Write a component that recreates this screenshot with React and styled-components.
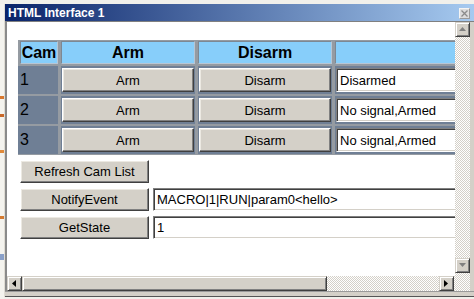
import styled, { createGlobalStyle } from "styled-components";

const cams = [
    { id: 1, status: "Disarmed" },
    { id: 2, status: "No signal,Armed" },
    { id: 3, status: "No signal,Armed" },
];

const GlobalStyle = createGlobalStyle`
    html, body {
        margin: 0;
        padding: 0;
        background: #f1f0eb;
        overflow: hidden;
        font-family: "Liberation Sans", Arial, sans-serif;
    }
    * { box-sizing: border-box; }
`;

function Arrow({ dir, color = "#000" }) {
    // small triangle glyph for scroll buttons
    const pts = {
        up: "1,6 4.5,2 8,6",
        down: "1,2 4.5,6 8,2",
        left: "6,1 2,4.5 6,8",
        right: "2,1 6,4.5 2,8",
    }[dir];
    return (
        <svg width="9" height="9" viewBox="0 0 9 9">
            <polygon points={pts} fill={color} />
        </svg>
    );
}

export default function App() {
    return (
        <Screen>
            <GlobalStyle />
            <DesktopStrip />
            <Window>
                <TitleBar>
                    <span>HTML Interface 1</span>
                    <CloseButton>
                        <svg width="9" height="9" viewBox="0 0 9 9">
                            <path d="M1.5 1.5 L7.5 7.5 M7.5 1.5 L1.5 7.5" stroke="#8a8a8a" strokeWidth="1.3" />
                        </svg>
                    </CloseButton>
                </TitleBar>

                <Frame>
                    <Viewport>
                        <CamTable>
                            <HeadCell>Cam</HeadCell>
                            <HeadCell>Arm</HeadCell>
                            <HeadCell>Disarm</HeadCell>
                            <HeadCell />

                            {cams.map(cam => (
                                <Row key={cam.id}>
                                    <CamCell>{cam.id}</CamCell>
                                    <DataCell><GrayButton>Arm</GrayButton></DataCell>
                                    <DataCell><GrayButton>Disarm</GrayButton></DataCell>
                                    <DataCell><Field>{cam.status}</Field></DataCell>
                                </Row>
                            ))}
                        </CamTable>

                        <Controls>
                            <ControlRow>
                                <GrayButton $width="129px" $height="23px">Refresh Cam List</GrayButton>
                            </ControlRow>
                            <ControlRow>
                                <GrayButton $width="129px" $height="23px">NotifyEvent</GrayButton>
                                <Field $width="340px" $height="23px">{"MACRO|1|RUN|param0<hello>"}</Field>
                            </ControlRow>
                            <ControlRow>
                                <GrayButton $width="129px" $height="23px">GetState</GrayButton>
                                <Field $width="340px" $height="23px">1</Field>
                            </ControlRow>
                        </Controls>
                    </Viewport>

                    <VScroll>
                        <ScrollButton><Arrow dir="up" color="#808080" /></ScrollButton>
                        <ScrollButton $bottom><Arrow dir="down" color="#808080" /></ScrollButton>
                    </VScroll>

                    <HScroll>
                        <ScrollButton><Arrow dir="left" /></ScrollButton>
                        <Thumb />
                        <ScrollButton $end><Arrow dir="right" /></ScrollButton>
                    </HScroll>
                </Frame>
                <BottomEdge />
            </Window>
        </Screen>
    );
}

const Screen = styled.div`
    display: flex;
    width: 474px;
    height: 299px;
    padding-top: 4px;
`;

// desktop showing behind the window on the left
const DesktopStrip = styled.div`
    width: 4px;
    flex-shrink: 0;
    background: linear-gradient(to bottom,
        #f4f3ee 0 92px, #d9782e 92px 95px, #f4f3ee 95px 110px,
        #c9692a 110px 113px, #f4f3ee 113px 146px, #e08a3a 146px 149px,
        #f4f3ee 149px 212px, #d47a30 212px 215px, #f4f3ee 215px 250px,
        #8aa0c8 250px 256px, #f4f3ee 256px);
`;

const Window = styled.div`
    flex: 1;
    display: flex;
    flex-direction: column;
    height: 293px;
    background: #d4d0c8;
    border-left: 1px solid #dedbd3;
`;

const TitleBar = styled.div`
    height: 17px;
    display: flex;
    align-items: center;
    justify-content: space-between;
    padding: 0 4px 0 3px;
    background: linear-gradient(to right, #0a246a, #a6caf0);
    color: #fff;
    font-weight: bold;
    font-size: 12px;
    white-space: nowrap;
`;

const CloseButton = styled.div`
    width: 11px;
    height: 11px;
    display: flex;
    align-items: center;
    justify-content: center;
    background: #dcdcdc;
    border: 1px solid;
    border-color: #f4f4f4 #9a9a9a #9a9a9a #f4f4f4;
    margin-top: 1px;
`;

const Frame = styled.div`
    display: grid;
    grid-template-columns: 448px 15px;
    grid-template-rows: 254px 15px;
    border-left: 2px solid #8a8a8a;
    border-top: 1px solid #808080;
`;

const Viewport = styled.div`
    background: #fff;
    overflow: hidden;
    padding: 18px 0 0 11px;
`;

const CamTable = styled.div`
    display: grid;
    grid-template-columns: 38px 134px 134px 160px;
    grid-template-rows: 23px repeat(3, 28px);
    column-gap: 3px;
    row-gap: 2px;
    width: max-content;
    padding: 1px 2px;
    background: #959ba2;
`;

const Row = styled.div`
    display: contents;
`;

const HeadCell = styled.div`
    background: #87cefa;
    font-weight: bold;
    font-size: 16px;
    display: flex;
    align-items: center;
    justify-content: center;
    border: 1px solid;
    border-color: #7d8893 #b7c6d4 #b7c6d4 #7d8893;
`;

const DataCell = styled.div`
    background: #6f7f95;
    padding: 2px 1px;
    display: flex;
    align-items: center;
`;

const CamCell = styled(DataCell)`
    font-size: 16px;
    padding-left: 2px;
    margin-left: -2px;
`;

const GrayButton = styled.div`
    width: ${({ $width }) => $width || "100%"};
    height: ${({ $height }) => $height || "24px"};
    flex-shrink: 0;
    display: flex;
    align-items: center;
    justify-content: center;
    background: #d4d0c8;
    font-size: 13px;
    color: #000;
    white-space: nowrap;
    border: 1px solid;
    border-color: #ffffff #404040 #404040 #ffffff;
    box-shadow: inset -1px -1px #808080, inset 1px 1px #ece9e2;
`;

const Field = styled.div`
    width: ${({ $width }) => $width || "100%"};
    height: ${({ $height }) => $height || "24px"};
    flex-shrink: 0;
    display: flex;
    align-items: center;
    padding-left: 3px;
    background: #fff;
    font-size: 13px;
    color: #000;
    white-space: nowrap;
    border: 1px solid;
    border-color: #808080 #ffffff #ffffff #808080;
    box-shadow: inset 1px 1px #404040, inset -1px -1px #d4d0c8;
`;

const Controls = styled.div`
    display: flex;
    flex-direction: column;
    gap: 5px;
    margin-top: 5px;
    padding-left: 2px;
`;

const ControlRow = styled.div`
    display: flex;
    gap: 4px;
`;

const dither = `repeating-conic-gradient(#d4d0c8 0 25%, #ffffff 0 50%) 0 0 / 2px 2px`;

const VScroll = styled.div`
    grid-row: 1 / 3;
    grid-column: 2;
    display: flex;
    flex-direction: column;
    background: ${dither};
`;

const HScroll = styled.div`
    grid-row: 2;
    grid-column: 1;
    display: flex;
    background: ${dither};
`;

const ScrollButton = styled.div`
    width: 15px;
    height: 15px;
    flex-shrink: 0;
    display: flex;
    align-items: center;
    justify-content: center;
    background: #d4d0c8;
    border: 1px solid;
    border-color: #d4d0c8 #404040 #404040 #d4d0c8;
    box-shadow: inset 1px 1px #ffffff, inset -1px -1px #808080;
    ${({ $bottom }) => $bottom && "margin-top: auto; margin-bottom: 18px;"}
    ${({ $end }) => $end && "margin-left: auto; margin-right: 1px;"}
`;

const Thumb = styled.div`
    width: 305px;
    height: 15px;
    background: #d4d0c8;
    border: 1px solid;
    border-color: #d4d0c8 #404040 #404040 #d4d0c8;
    box-shadow: inset 1px 1px #ffffff, inset -1px -1px #808080;
`;

const BottomEdge = styled.div`
    height: 6px;
    border-top: 1px solid #9a9a9a;
    border-bottom: 1px solid #555;
    background: #d4d0c8;
`;
